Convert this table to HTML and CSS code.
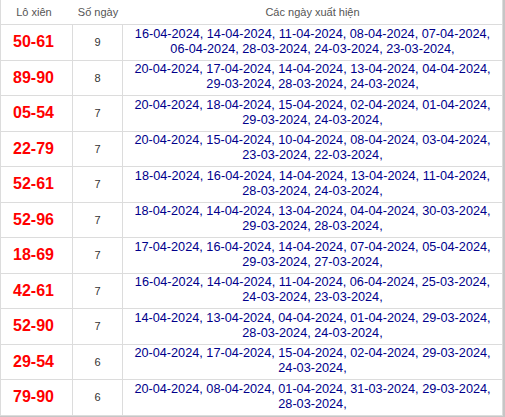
FILE: index.html
```html
<!DOCTYPE html>
<html lang="vi">
<head>
<meta charset="utf-8">
<title>Lô xiên</title>
<link rel="stylesheet" href="styles.css">
</head>
<body>
<div class="wrap">
<table class="tbl">
<colgroup><col class="w1"><col class="w2"><col></colgroup>
<thead>
<tr><th class="c1">Lô xiên</th><th class="c2">Số ngày</th><th class="c3">Các ngày xuất hiện</th></tr>
</thead>
<tbody>
<tr><td class="c1">50-61</td><td class="c2">9</td><td class="c3">16-04-2024, 14-04-2024, 11-04-2024, 08-04-2024, 07-04-2024, 06-04-2024, 28-03-2024, 24-03-2024, 23-03-2024,</td></tr>
<tr><td class="c1">89-90</td><td class="c2">8</td><td class="c3">20-04-2024, 17-04-2024, 14-04-2024, 13-04-2024, 04-04-2024, 29-03-2024, 28-03-2024, 24-03-2024,</td></tr>
<tr><td class="c1">05-54</td><td class="c2">7</td><td class="c3">20-04-2024, 18-04-2024, 15-04-2024, 02-04-2024, 01-04-2024, 29-03-2024, 24-03-2024,</td></tr>
<tr><td class="c1">22-79</td><td class="c2">7</td><td class="c3">20-04-2024, 15-04-2024, 10-04-2024, 08-04-2024, 03-04-2024, 23-03-2024, 22-03-2024,</td></tr>
<tr><td class="c1">52-61</td><td class="c2">7</td><td class="c3">18-04-2024, 16-04-2024, 14-04-2024, 13-04-2024, 11-04-2024, 28-03-2024, 24-03-2024,</td></tr>
<tr><td class="c1">52-96</td><td class="c2">7</td><td class="c3">18-04-2024, 14-04-2024, 13-04-2024, 04-04-2024, 30-03-2024, 29-03-2024, 28-03-2024,</td></tr>
<tr><td class="c1">18-69</td><td class="c2">7</td><td class="c3">17-04-2024, 16-04-2024, 14-04-2024, 07-04-2024, 05-04-2024, 29-03-2024, 27-03-2024,</td></tr>
<tr><td class="c1">42-61</td><td class="c2">7</td><td class="c3">16-04-2024, 14-04-2024, 11-04-2024, 06-04-2024, 25-03-2024, 24-03-2024, 23-03-2024,</td></tr>
<tr><td class="c1">52-90</td><td class="c2">7</td><td class="c3">14-04-2024, 13-04-2024, 04-04-2024, 01-04-2024, 29-03-2024, 28-03-2024, 24-03-2024,</td></tr>
<tr><td class="c1">29-54</td><td class="c2">6</td><td class="c3">20-04-2024, 17-04-2024, 15-04-2024, 02-04-2024, 29-03-2024, 24-03-2024,</td></tr>
<tr><td class="c1">79-90</td><td class="c2">6</td><td class="c3">20-04-2024, 08-04-2024, 01-04-2024, 31-03-2024, 29-03-2024, 28-03-2024,</td></tr>
</tbody>
</table>
</div>
</body>
</html>
```
FILE: styles.css
```css
html, body {
  margin: 0;
  padding: 0;
  background: #fff;
}
body {
  font-family: "Liberation Sans", Arial, sans-serif;
}
.wrap {
  width: 503px;
  border-right: 2px solid #c6c6c6;
  border-bottom: 2px solid #c6c6c6;
}
.tbl {
  width: 503px;
  table-layout: fixed;
  border-collapse: separate;
  border-spacing: 0;
  border-left: 1px solid #dcdcdc;
  border-right: 1px solid #dcdcdc;
}
.w1 { width: 72px; }
.w2 { width: 50px; }
.tbl th {
  box-sizing: border-box;
  height: 25px;
  padding: 0;
  font-size: 11px;
  font-weight: normal;
  color: #555;
  text-align: center;
  vertical-align: middle;
  border-bottom: 1px solid #dcdcdc;
}
.tbl td {
  padding: 0;
  text-align: center;
  vertical-align: middle;
  border-bottom: 1px solid #dcdcdc;
}
.tbl th.c1 { padding-right: 6px; }
.tbl td.c1 {
  padding-right: 6px;
  font-size: 16px;
  font-weight: bold;
  color: #ff0000;
  border-right: 1px solid #dcdcdc;
}
.tbl td.c2 {
  font-size: 11px;
  color: #333;
  border-right: 1px solid #dcdcdc;
}
.tbl td.c3 {
  padding: 1.75px 6px 2.75px;
  font-size: 12.7px;
  line-height: 15px;
  color: #00008b;
}
```
